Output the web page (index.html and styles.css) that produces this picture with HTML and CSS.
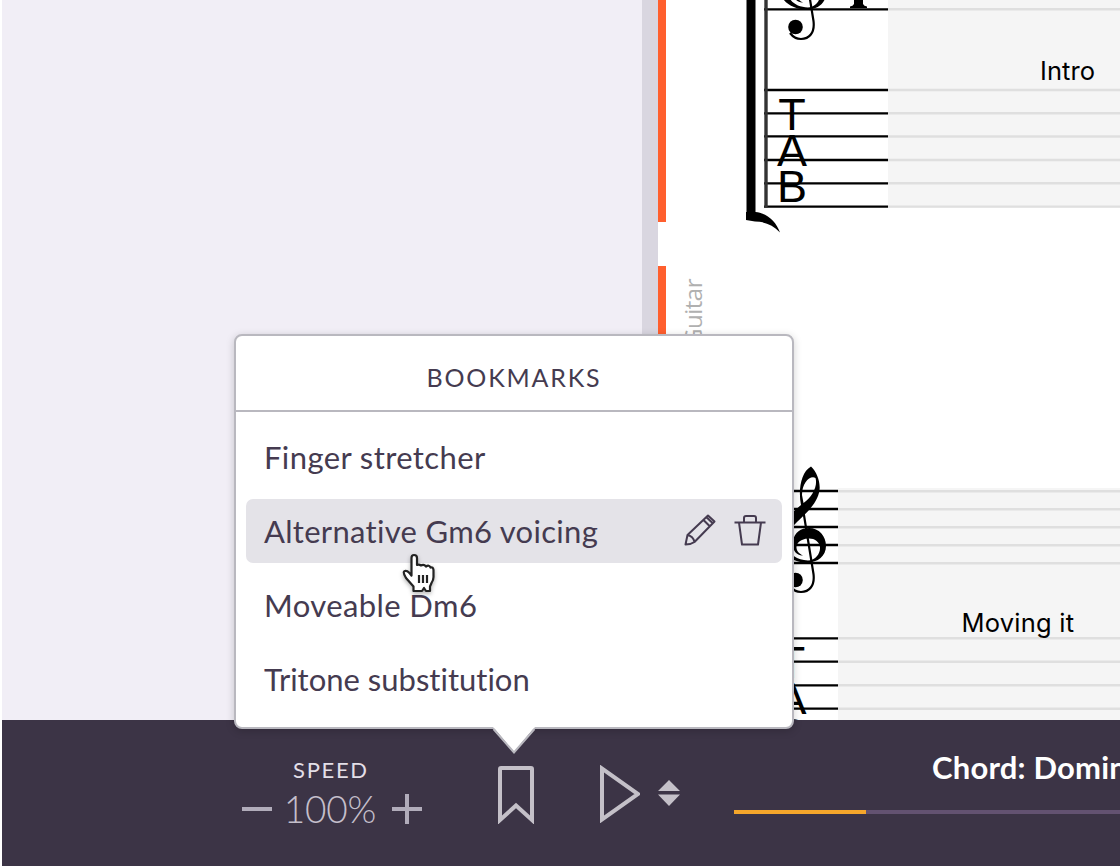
FILE: index.html
```html
<!DOCTYPE html>
<html lang="en">
<head>
<meta charset="utf-8">
<title>Bookmarks</title>
<link rel="stylesheet" href="styles.css">
</head>
<body>
<div class="app">
  <main class="workspace">
    <div class="side"></div>
    <div class="divider"></div>
    <svg class="score" viewBox="658 0 462 720">
      <defs>
        <g id="clef">
          <path fill-rule="evenodd" d="M811 466.500C817 472 820.500 482 819.500 490C817.500 504 806 513 797 522C790 529 786.500 537 787.500 545C789 555 797 560 808 560.500C816 560 820.500 553 820 547C819 541 814 538 808 538.500C801 539 796 543 796.500 548C797 552 800 554 803 555.500C796 556 791.500 549 793 541C794.500 532 801 528 809 528C819 528 826 536 826 546C826 556 818 562.500 807 562.500C793 562.500 780 555 779.500 541C779 525 791 513 801 505C798 490 801 472 811 466.500ZM815.500 478C810 475 802 483 802 495L803.500 503C812 497 818 486 815.500 478Z"/>
          <path class="thin" d="M802.500 506L813.500 574C815 586 809 592 801 592C797 592 793 590 790 586"/>
          <circle cx="795.500" cy="580" r="7.300"/>
        </g>
      </defs>
      <rect class="strip" x="658" y="0" width="8" height="222"/>
      <rect class="strip" x="658" y="266" width="8" height="120"/>
      <rect class="bars" x="888" y="0" width="232" height="208"/>
      <rect class="bars" x="838" y="488" width="282" height="232"/>
      <path class="faint" d="M888 9.300H1120M888 90H1120M888 113.300H1120M888 136.500H1120M888 160H1120M888 183.300H1120M888 206.600H1120M838 491.300H1120M838 509.200H1120M838 527.200H1120M838 545.200H1120M838 563.200H1120M838 638.300H1120M838 661.700H1120M838 685.300H1120M838 708.700H1120"/>
      <path class="staff" d="M764 9.300H888M764 90H888M764 113.300H888M764 136.300H888M764 160H888M764 183.300H888M764 206.700H888M764 491H838M764 509H838M764 527H838M764 545H838M764 563H838M764 638.300H838M764 661.700H838M764 685.300H838M764 708.700H838"/>
      <path class="barline" d="M766 0V207.500"/>
      <path d="M746.500 0H755.500V212C767 213 776 221 780 232.500C773 225 765 221.500 755 221.500L746 220V212H746.500Z"/>
      <use href="#clef" y="-553"/>
      <use href="#clef"/>
      <path d="M854 0H863V4Q864 6 867 6.500V8H850V6.500Q853 6 854 4Z"/>
      <g class="tab"><text x="792" y="129.500">T</text><text x="792" y="165.500">A</text><text x="792" y="202">B</text></g>
      <g class="tab"><text x="791.500" y="677.500">T</text><text x="791.500" y="713.500">A</text><text x="791.500" y="750">B</text></g>
      <text class="mark" x="1040" y="80" textLength="55">Intro</text>
      <text class="mark" x="961.500" y="632" textLength="112.500">Moving it</text>
      <text class="track-name" transform="translate(702 279) rotate(-90)">Guitar</text>
    </svg>
  </main>

  <footer class="player">
    <div class="speed">
      <div class="speed-label">SPEED</div>
      <div class="speed-row">
        <svg class="step" viewBox="0 0 30 30"><path d="M0 15H30"/></svg>
        <span class="speed-value">100%</span>
        <svg class="step" viewBox="0 0 30 30"><path d="M0 15H30M15 0V30"/></svg>
      </div>
    </div>
    <svg class="bookmark" viewBox="0 0 36 58"><path d="M2 3Q2 2 3 2H33Q34 2 34 3V54L18 39.500L2 54Z"/><path class="foot" d="M0 53L4 49V54L0 58ZM36 53L32 49V54L36 58Z"/></svg>
    <svg class="play" viewBox="0 0 40 58"><path d="M2 3.500V54.500L38 29Z"/></svg>
    <svg class="spinner" viewBox="0 0 24 28"><path d="M12 1L23 12H1ZM1 15.500H23L12 27Z"/></svg>
    <div class="track">
      <div class="chord">Chord: Dominant</div>
      <div class="progress"><div class="progress-fill"></div></div>
    </div>
  </footer>

  <section class="popover">
    <h2 class="popover-title">BOOKMARKS</h2>
    <ul class="list">
      <li class="item">Finger stretcher</li>
      <li class="item active">Alternative Gm6 voicing
        <span class="actions">
          <svg class="icon" viewBox="0 0 32 32"><path d="M1.500 30.500L3.500 21L24 1.500L30.500 7.500L10.500 28Q7 30.500 1.500 30.500ZM3.500 21Q9 22 10.500 28M19.500 6L26 12.500M22.500 3.200L29 9.500"/></svg>
          <svg class="icon" viewBox="0 0 32 32"><path d="M.5 8.500H31.500M5 8.500L8 30.500H24L27 8.500M10 8.500V4Q10 2 12 2H20Q22 2 22 4V8.500"/></svg>
        </span>
      </li>
      <li class="item">Moveable Dm6</li>
      <li class="item narrow">Tritone substitution</li>
    </ul>
    <svg class="arrow" viewBox="0 0 44 28"><path class="arrow-fill" d="M1 0L22 25L43 0Z"/><path class="arrow-line" d="M1.500 2L22 25.500L42.500 2"/></svg>
  </section>

  <svg class="pointer" viewBox="0 0 34 40"><path d="M9.500 22.500V5Q9.500 2 12 2Q15 2 15 5V12Q17 11 19 12.500Q22 11 24 13.500Q27 11.500 28.500 14.500Q31 13.500 31.500 17V24Q31.500 27 29.500 30L28 33.500V38H24L22 35L20 38H11.500V33.500L4 25Q1 20 2 18.500Q5 16 9.500 22.500Z"/><path class="fingers" d="M17 22V30M21 22V30M25 22V30"/></svg>
</div>
</body>
</html>
```
FILE: styles.css
```css
* { box-sizing: border-box; }
body { margin: 0; background: #fff; font-family: Lato, "Open Sans", sans-serif; font-variant-ligatures: none; color: #453b50; }
svg { display: block; flex: none; fill: none; }
.app { position: relative; width: 1120px; height: 866px; padding-left: 2px; overflow: hidden; display: flex; flex-direction: column; }

.workspace { display: flex; height: 720px; }
.side { width: 640px; background: #f1eef6; }
.divider { width: 16px; background: #d9d6e0; }
.score { width: 462px; height: 720px; fill: #000; }
.strip { fill: #ff5f2e; }
.bars { fill: #f5f5f5; }
.faint { stroke: #dfdfdf; stroke-width: 2.4; }
.staff { stroke: #000; stroke-width: 2.3; }
.barline { stroke: #333; stroke-width: 3.4; }
.thin { fill: none; stroke: #000; stroke-width: 2.2; }
.tab { font: 45px "Liberation Sans", Arial, sans-serif; text-anchor: middle; }
.mark { font: 25.5px Inter, sans-serif; }
.track-name { font: 24px "Open Sans", sans-serif; letter-spacing: -.5px; fill: #b0b0b0; text-anchor: end; }

.player { display: flex; align-items: flex-start; height: 146px; padding-left: 240px; background: #3c3446; }
.speed { width: 180px; padding-top: 36px; }
.speed-label { height: 28px; line-height: 28px; padding-left: 51px; font-size: 22px; letter-spacing: 1.7px; color: #e3dfe8; }
.speed-row { display: flex; align-items: center; justify-content: space-between; height: 50px; }
.speed-value { padding: 0 4px 2px 0; font-size: 37px; font-weight: 300; letter-spacing: -.2px; color: #c4bfcb; white-space: nowrap; }
.step { width: 30px; height: 30px; stroke: #b1acba; stroke-width: 4; }
.bookmark { width: 36px; height: 58px; margin: 46px 66px 0 76px; stroke: #c4c0c8; stroke-width: 4; }
.foot { fill: #c4c0c8; stroke: none; }
.play { width: 40px; height: 58px; margin-top: 45px; stroke: #c4c0c8; stroke-width: 4; }
.spinner { width: 24px; height: 28px; margin: 59px 53px 0 17px; fill: #c4c0c8; }
.track { flex: 1; min-width: 0; overflow: hidden; padding-top: 27px; }
.chord { height: 40px; line-height: 40px; margin-left: 198px; font-size: 31px; font-weight: 700; letter-spacing: .2px; color: #fff; white-space: nowrap; }
.progress { height: 4px; margin-top: 23px; background: #635271; }
.progress-fill { width: 132px; height: 4px; background: #f5a62b; }

.popover { position: absolute; left: 234px; top: 334px; width: 560px; height: 395px; background: #fff; border: 2px solid #b9b8bf; border-radius: 8px; box-shadow: 0 2px 8px rgba(0, 0, 0, .18); }
.popover-title { margin: 0; height: 76px; padding-top: 3px; line-height: 76px; border-bottom: 2px solid #b9b8bf; text-align: center; font-size: 25px; font-weight: 400; letter-spacing: 1.8px; }
.list { list-style: none; margin: 0; padding: 13px 10px 0; display: flex; flex-direction: column; gap: 10px; }
.item { display: flex; align-items: center; justify-content: space-between; height: 64px; padding: 0 16px 0 18px; border-radius: 7px; font-size: 31px; letter-spacing: .4px; white-space: nowrap; }
.active { background: #e4e3e8; letter-spacing: .3px; }
.narrow { letter-spacing: 0; }
.actions { display: flex; gap: 18px; margin-top: -2px; }
.icon { width: 32px; height: 32px; stroke: #453b50; stroke-width: 2; stroke-linejoin: round; }
.arrow { position: absolute; left: 256px; top: 391px; width: 44px; height: 28px; }
.arrow-fill { fill: #fff; }
.arrow-line { stroke: #b9b8bf; stroke-width: 2; }
.pointer { position: absolute; left: 402px; top: 553px; width: 34px; height: 40px; fill: #fff; stroke: #222; stroke-width: 2.2; stroke-linejoin: round; filter: drop-shadow(0 2px 2px rgba(0, 0, 0, .3)); }
```
